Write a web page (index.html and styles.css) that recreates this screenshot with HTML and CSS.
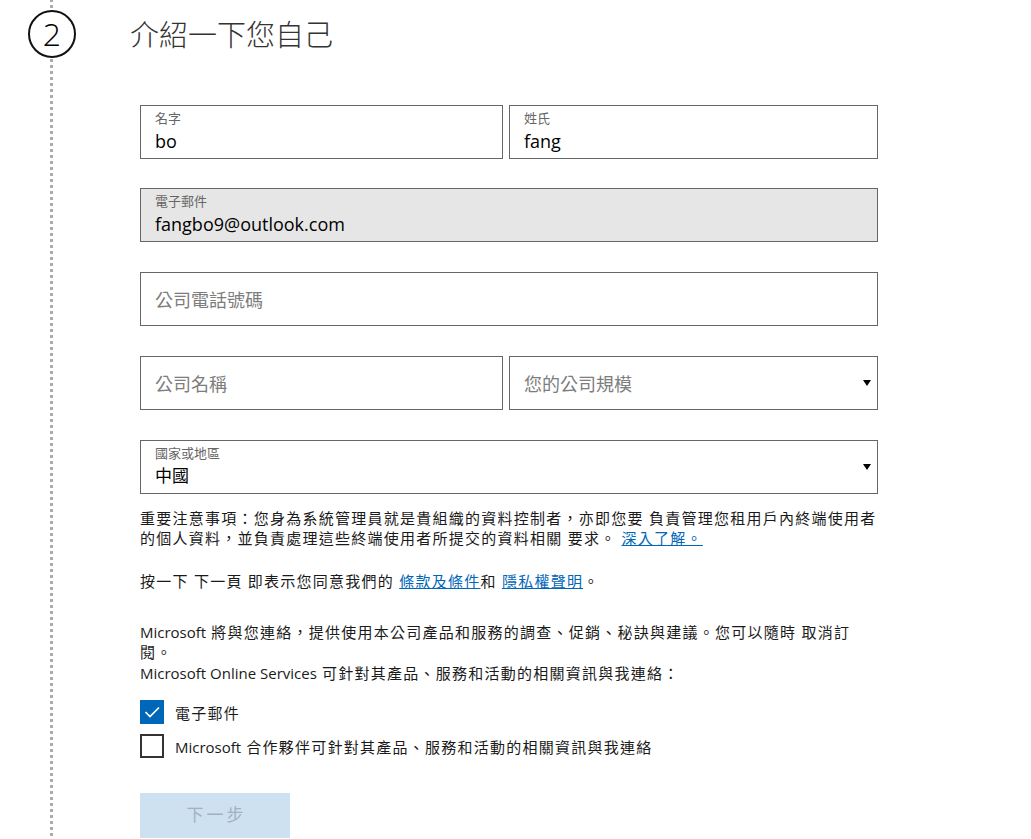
FILE: index.html
```html
<!DOCTYPE html>
<html lang="zh-Hant">
<head>
<meta charset="utf-8">
<title>介紹一下您自己</title>
<link rel="stylesheet" href="styles.css">
</head>
<body>
<div class="page">
  <div class="rail">
    <div class="step">2</div>
  </div>
  <main class="content">
    <h1 class="title">介紹一下您自己</h1>
    <form class="form">
      <div class="fields">
        <div class="row">
          <div class="field stacked">
            <span class="label">名字</span>
            <span class="value">bo</span>
          </div>
          <div class="field stacked">
            <span class="label">姓氏</span>
            <span class="value">fang</span>
          </div>
        </div>
        <div class="field stacked readonly">
          <span class="label">電子郵件</span>
          <span class="value">fangbo9@outlook.com</span>
        </div>
        <div class="field empty">
          <span class="placeholder">公司電話號碼</span>
        </div>
        <div class="row">
          <div class="field empty">
            <span class="placeholder">公司名稱</span>
          </div>
          <div class="field empty select">
            <span class="placeholder">您的公司規模</span>
            <svg class="caret" width="8" height="6" viewBox="0 0 8 6"><polygon points="0,0 8,0 4,6"/></svg>
          </div>
        </div>
        <div class="field select stacked-select">
          <div class="stack">
            <span class="label">國家或地區</span>
            <span class="value cjk">中國</span>
          </div>
          <svg class="caret" width="8" height="6" viewBox="0 0 8 6"><polygon points="0,0 8,0 4,6"/></svg>
        </div>
      </div>

      <p class="text notice">重要注意事項：您身為系統管理員就是貴組織的資料控制者，亦即您要 負責管理您租用戶內終端使用者的個人資料，並負責處理這些終端使用者所提交的資料相關 要求。 <a href="#">深入了解。</a></p>

      <p class="text agree">按一下 下一頁 即表示您同意我們的 <a href="#">條款及條件</a>和 <a href="#">隱私權聲明</a>。</p>

      <p class="text contact"><span class="en">Microsoft</span> 將與您連絡，提供使用本公司產品和服務的調查、促銷、秘訣與建議。您可以隨時 取消訂閱。</p>
      <p class="text contact2"><span class="en">Microsoft Online Services</span> 可針對其產品、服務和活動的相關資訊與我連絡：</p>

      <div class="checks">
        <label class="check">
          <span class="box on"><svg width="24" height="24" viewBox="0 0 24 24"><polyline points="5.5,12 10,16.5 19,7.5" fill="none" stroke="#fff" stroke-width="1.7"/></svg></span>
          <span class="check-text">電子郵件</span>
        </label>
        <label class="check">
          <span class="box"></span>
          <span class="check-text"><span class="en">Microsoft</span> 合作夥伴可針對其產品、服務和活動的相關資訊與我連絡</span>
        </label>
      </div>

      <button type="button" class="next">下一步</button>
    </form>
  </main>
</div>
</body>
</html>
```

FILE: styles.css
```css
* {
  box-sizing: border-box;
}

html,
body {
  margin: 0;
  padding: 0;
  background: #fff;
}

body {
  font-family: "Open Sans", "Noto Sans CJK TC", sans-serif;
  color: #000;
}

.page {
  display: flex;
  height: 839px;
  overflow: hidden;
}

.rail {
  width: 48px;
  margin-left: 28px;
  flex: none;
  background-image: linear-gradient(#ababab 50%, transparent 50%);
  background-size: 3px 6px;
  background-position: 22px 5px;
  background-repeat: repeat-y;
}

.step {
  margin-top: 10px;
  width: 48px;
  height: 48px;
  border: 2px solid #111;
  border-radius: 50%;
  background: #fff;
  display: flex;
  align-items: center;
  justify-content: center;
  font-size: 32px;
  font-weight: 300;
  line-height: 1;
  color: #000;
}

.content {
  margin-left: 54px;
}

.title {
  margin: 15px 0 0;
  font-family: "Noto Sans CJK TC", sans-serif;
  font-size: 29px;
  font-weight: 300;
  line-height: 36px;
  color: #333;
  letter-spacing: 0;
}

.form {
  margin: 54px 0 0 10px;
  width: 740px;
}

.fields {
  width: 738px;
  display: flex;
  flex-direction: column;
  gap: 30px;
}

.fields > .row:first-child {
  margin-bottom: -1px;
}

.row {
  display: grid;
  grid-template-columns: 363px 1fr;
  gap: 6px;
}

.field {
  height: 54px;
  border: 1px solid #666;
  padding: 3px 6px 0 14px;
  display: flex;
  background: #fff;
}

.field.stacked {
  flex-direction: column;
}

.field.readonly {
  background: #e6e6e6;
}

.field.empty {
  align-items: center;
  padding-top: 0;
}

.field.select {
  justify-content: space-between;
}

.field.stacked-select {
  align-items: stretch;
}

.stack {
  display: flex;
  flex-direction: column;
}

.label {
  font-size: 13px;
  line-height: 18px;
  color: #666;
}

.value {
  font-size: 18px;
  line-height: 28px;
  color: #000;
}

.value.cjk {
  font-size: 17px;
}

.placeholder {
  font-size: 18px;
  color: #7d7d7d;
}

.caret {
  flex: none;
  align-self: center;
  fill: #000;
}

.stacked-select .caret {
  margin-top: -3px;
}

.text {
  margin: 0;
  font-size: 15px;
  line-height: 20px;
  letter-spacing: 1.25px;
  color: #1a1a1a;
}

.text a {
  color: #0067b8;
  text-decoration: underline;
}

.en {
  letter-spacing: 0;
}

.notice {
  margin-top: 14px;
}

.agree {
  margin-top: 23px;
}

.contact {
  margin-top: 31px;
  width: 720px;
}

.contact2 {
  margin-top: 1px;
}

.checks {
  margin-top: 17px;
  display: flex;
  flex-direction: column;
  gap: 10px;
}

.check {
  display: flex;
  align-items: center;
  gap: 11px;
  font-size: 15px;
  letter-spacing: 1.25px;
  color: #1a1a1a;
}

.box {
  width: 24px;
  height: 24px;
  flex: none;
  border: 2px solid #333;
  background: #fff;
  display: block;
}

.box.on {
  border: none;
  background: #0067b8;
}

.box svg {
  display: block;
}

.next {
  margin-top: 35px;
  width: 150px;
  height: 45px;
  padding: 0 0 3px 3px;
  border: none;
  background: #cde1f1;
  color: #a2b1be;
  font-family: "Noto Sans CJK TC", sans-serif;
  font-size: 17px;
  letter-spacing: 3px;
  line-height: 42px;
  display: block;
}
```
